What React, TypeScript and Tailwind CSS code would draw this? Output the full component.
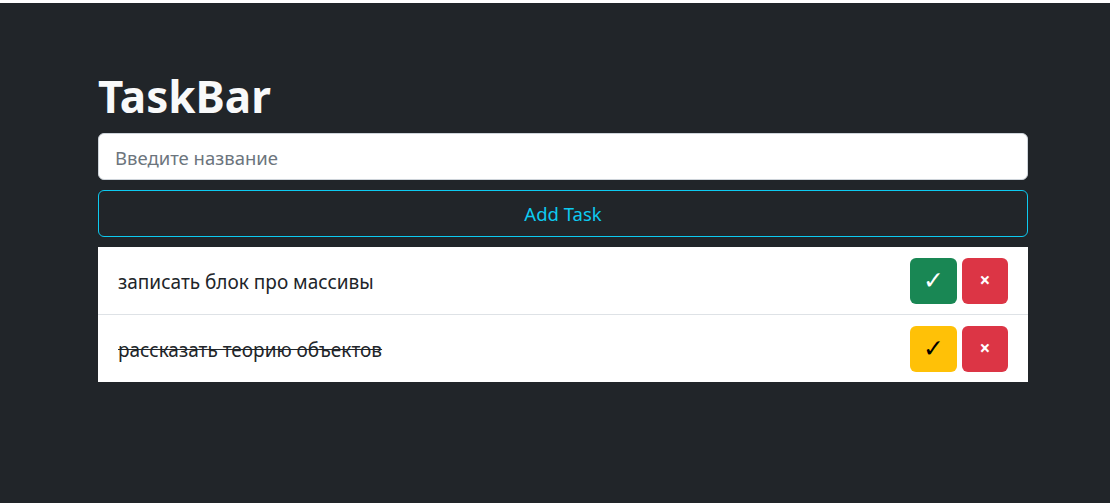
const tasks = [
  { title: "записать блок про массивы", done: false },
  { title: "рассказать теорию объектов", done: true },
];

function TaskRow({ title, done }: { title: string; done: boolean }) {
  return (
    <li className="flex h-[68px] items-center justify-between border-b border-[#dee2e6] bg-white pl-[20px] pr-[20px] last:h-[67px] last:border-b-0">
      <span className={"pt-[4px] text-[19px] text-[#212529] " + (done ? "line-through decoration-[#212529]" : "")}>
        {title}
      </span>
      <div className="flex gap-[5px]">
        <button
          className={
            "flex h-[46px] w-[47px] items-center justify-center rounded-[6px] font-['DejaVu_Sans',sans-serif] text-[25px] leading-none " +
            (done ? "bg-[#ffc107] text-black" : "bg-[#198754] text-white")
          }
        >
          ✓
        </button>
        <button className="flex h-[46px] w-[46px] items-center justify-center rounded-[6px] bg-[#dc3545] text-[19px] font-bold text-white">
          ×
        </button>
      </div>
    </li>
  );
}

export default function App() {
  return (
    <div className="min-h-screen bg-[#212529] font-['Noto_Sans','Open_Sans',sans-serif]">
      <div className="h-[3px] bg-white" />
      <div className="ml-[98px] w-[930px] pt-[67px]">
        <h1 className="mb-[10px] text-[44px] font-bold leading-[53px] text-[#f8f9fa]">TaskBar</h1>
        <input
          className="block h-[47px] w-full rounded-[6px] border border-[#ced4da] bg-white px-[16px] pt-[2px] text-[18.5px] text-[#212529] outline-none placeholder:text-[#6c757d]"
          placeholder="Введите название"
        />
        <button className="mt-[10px] block h-[47px] w-full rounded-[6px] border border-[#0dcaf0] text-[18.5px] text-[#0dcaf0]">
          Add Task
        </button>
        <ul className="mt-[10px]">
          {tasks.map((t) => (
            <TaskRow key={t.title} {...t} />
          ))}
        </ul>
      </div>
    </div>
  );
}
